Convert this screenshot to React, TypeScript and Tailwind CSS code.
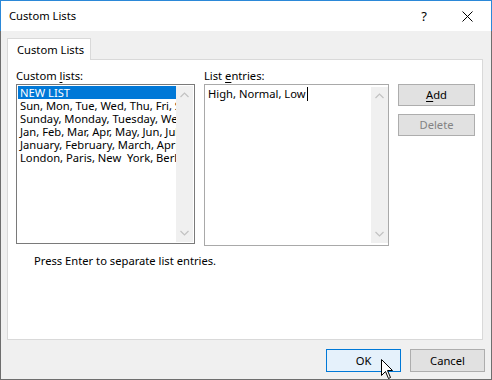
import React from "react";

const lists = [
  "Sun, Mon, Tue, Wed, Thu, Fri, Sat",
  "Sunday, Monday, Tuesday, Wednesday",
  "Jan, Feb, Mar, Apr, May, Jun, Jul",
  "January, February, March, April",
  "London, Paris, New  York, Berlin",
];

function Chevron({ up }: { up?: boolean }) {
  return (
    <svg width="9" height="6" viewBox="0 0 9 6" className="block">
      <path
        d={up ? "M0.5 5 L4.5 1 L8.5 5" : "M0.5 1 L4.5 5 L8.5 1"}
        fill="none"
        stroke="#c2c2c2"
        strokeWidth="1.2"
      />
    </svg>
  );
}

function ScrollBar() {
  return (
    <div className="flex w-[17px] shrink-0 flex-col items-center justify-between bg-[#f0f0f0] py-[6px]">
      <Chevron up />
      <Chevron />
    </div>
  );
}

export default function App() {
  return (
    <div className="flex h-[380px] w-[492px] flex-col font-['Noto_Sans',sans-serif] text-[11.2px] leading-[16px] text-black">
      {/* title bar */}
      <div className="flex h-[31px] shrink-0 items-center border-x border-t border-[#2b88d8] bg-white pl-[8px]">
        <span className="flex-1">Custom Lists</span>
        <span className="mr-[35px] text-[13px]">?</span>
        <svg width="11" height="11" viewBox="0 0 11 11" className="mr-[18px]">
          <path d="M0.5 0.5 L10.5 10.5 M10.5 0.5 L0.5 10.5" stroke="#000" strokeWidth="1" />
        </svg>
      </div>

      {/* body */}
      <div className="flex flex-1 flex-col border-x border-b border-[#6e6e6e] bg-[#f0f0f0] px-[6px] pt-[7px]">
        <div className="relative z-10 -mb-px h-[22px] w-[84px] border-x border-t border-[#d9d9d9] bg-white pl-[9px] pt-[3px]">
          Custom Lists
        </div>
        <div className="flex h-[281px] w-[476px] flex-col border border-[#d9d9d9] bg-white pl-[8px] pt-[8px]">
          <div className="flex items-start">
            {/* custom lists column */}
            <div className="flex w-[179px] flex-col">
              <div>
                Custom <span className="underline underline-offset-2">l</span>ists:
              </div>
              <div className="flex h-[160px] border border-[#7a7a7a] p-px">
                <div className="min-w-0 flex-1 overflow-hidden leading-[13px]">
                  <div className="whitespace-nowrap bg-[#0078d7] pl-[2px] text-white">NEW LIST</div>
                  {lists.map((l) => (
                    <div key={l} className="whitespace-pre pl-[2px]">
                      {l}
                    </div>
                  ))}
                </div>
                <ScrollBar />
              </div>
            </div>

            {/* list entries column */}
            <div className="ml-[9px] flex w-[185px] flex-col">
              <div>
                List <span className="underline underline-offset-2">e</span>ntries:
              </div>
              <div className="flex h-[162px] border border-[#a9a9a9] py-[2px]">
                <div className="flex min-w-0 flex-1 items-start pl-[3px] leading-[13px]">
                  <span className="whitespace-nowrap">High, Normal, Low</span>
                  <span className="ml-px h-[14px] w-px bg-black" />
                </div>
                <ScrollBar />
              </div>
            </div>

            {/* buttons */}
            <div className="ml-[9px] flex w-[77px] flex-col gap-[8px] pt-[16px]">
              <button className="h-[22px] border border-[#adadad] bg-[#e1e1e1]">
                <span className="underline underline-offset-2">A</span>dd
              </button>
              <button className="h-[22px] border border-[#adadad] bg-[#e1e1e1] text-[#838383]">
                Delete
              </button>
            </div>
          </div>
          <div className="ml-[18px] mt-[7px]">Press Enter to separate list entries.</div>
        </div>

        {/* footer */}
        <div className="mt-[9px] flex justify-end gap-[9px]">
          <div className="relative">
            <button className="h-[23px] w-[75px] border border-[#0078d7] bg-[#e5f1fb]">OK</button>
            <svg
              width="13"
              height="20"
              viewBox="0 0 13 20"
              className="absolute left-[55px] top-[10px]"
            >
              <path
                d="M0.5 0.5 L0.5 16.5 L4.5 12.5 L7.5 19.5 L9.5 18.5 L6.5 11.5 L11.5 11.5 Z"
                fill="#fff"
                stroke="#000"
                strokeWidth="1"
                strokeLinejoin="miter"
              />
            </svg>
          </div>
          <button className="h-[23px] w-[75px] border border-[#adadad] bg-[#e1e1e1]">Cancel</button>
        </div>
      </div>
    </div>
  );
}
